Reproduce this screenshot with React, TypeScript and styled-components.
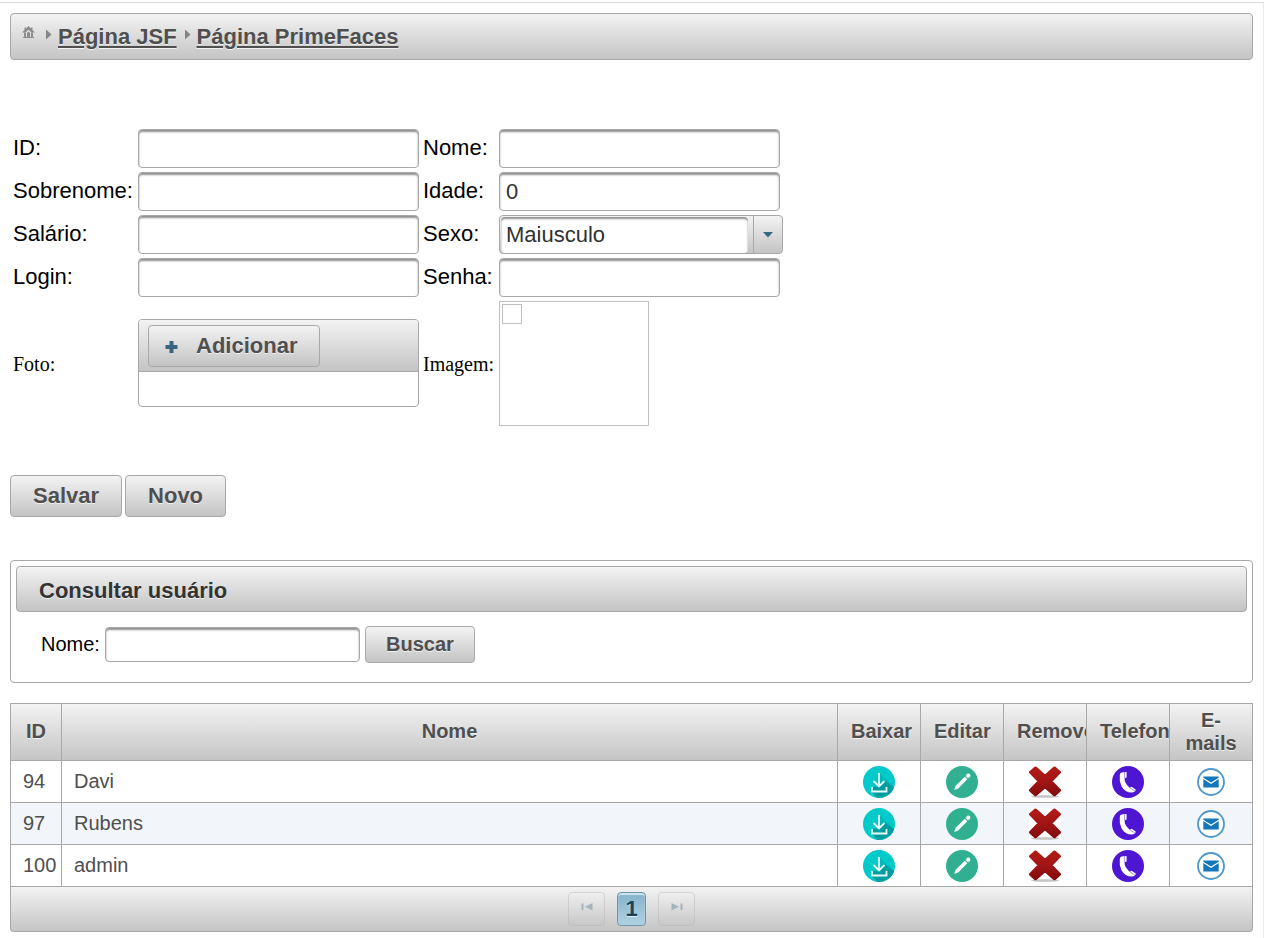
import React from 'react';
import styled, { createGlobalStyle, css } from 'styled-components';

const line = '#a8a8a8';
const sans = '"Liberation Sans", Arial, Helvetica, sans-serif';
const serif = '"Liberation Serif", "Times New Roman", serif';

const GlobalStyle = createGlobalStyle`
  *, *::before, *::after { box-sizing: border-box; }
  body { margin: 0; background: #fff; color: #000; font-family: ${sans}; }
`;

const raised = css`
  border: 1px solid ${line};
  background: linear-gradient(#f3f3f3, #c4c4c4);
  color: #4f4f4f;
  text-shadow: 0 1px 0 rgba(255, 255, 255, 0.7);
`;

const sunken = css`
  border: 1px solid ${line};
  border-radius: 4px;
  background: #fff;
  box-shadow: inset 0 2px 2px #8f8f8f;
  color: #313131;
  font-family: ${sans};
`;

const Page = styled.div`
  margin: 2px 6px 0 0;
  padding: 10px 10px 6px;
  border-top: 1px solid #dadada;
  border-right: 1px solid #ececec;
`;

const Breadcrumb = styled.nav`
  ${raised}
  display: flex;
  align-items: center;
  height: 47px;
  padding: 0 11px;
  border-radius: 4px;
  font-size: 22px;
  font-weight: bold;
`;

const CrumbLink = styled.a`
  color: inherit;
  text-decoration: underline;
  text-decoration-thickness: 2px;
  text-underline-offset: 2px;
`;

const HomeLink = styled.a`
  display: flex;
  padding-bottom: 7px;
`;

const Separator = styled.svg`
  width: 20px;
  height: 16px;
  margin-bottom: 6px;
`;

const Form = styled.form`
  display: grid;
  grid-template-columns: 121px 281px 72px 284px;
  gap: 4px;
  align-items: center;
  padding: 69px 0 0 3px;
`;

const Label = styled.label`
  padding-bottom: 1px;
  font-size: 22px;
  line-height: 26px;
  white-space: nowrap;
`;

const PlainLabel = styled.label`
  font-family: ${serif};
  font-size: 20px;
  line-height: 24px;
`;

const Field = styled.input`
  ${sunken}
  width: 281px;
  height: 39px;
  padding: 0 6px;
  font-size: 22px;
`;

const SelectBox = styled.div`
  ${raised}
  display: grid;
  grid-template-columns: 1fr 29px;
  height: 39px;
  border-radius: 4px;
`;

const Select = styled.select`
  ${sunken}
  grid-area: 1 / 1;
  appearance: none;
  margin: 1px 5px 0 1px;
  padding: 0 5px 1px;
  border-width: 0;
  font-size: 22px;
`;

const SelectTrigger = styled.span`
  display: flex;
  align-items: center;
  justify-content: center;
  border-left: 1px solid ${line};
`;

const Upload = styled.div`
  height: 88px;
  margin-bottom: 1px;
  border: 1px solid ${line};
  border-radius: 4px;
  overflow: hidden;
`;

const UploadBar = styled.div`
  ${raised}
  border-width: 0 0 1px;
  padding: 5px 9px 4px;
`;

const Button = styled.button<{ $compact?: boolean }>`
  ${raised}
  display: inline-flex;
  align-items: center;
  height: ${p => (p.$compact ? 37 : 42)}px;
  padding: 0 ${p => (p.$compact ? 20 : 22)}px;
  border-radius: 4px;
  font-family: ${sans};
  font-size: ${p => (p.$compact ? 20 : 22)}px;
  font-weight: bold;
`;

const AddButton = styled(Button)`
  gap: 18px;
  padding: 0 22px 0 15px;
`;

const Preview = styled.div`
  width: 150px;
  height: 125px;
  padding: 2px;
  border: 1px solid #c0c0c0;
`;

const PreviewMark = styled.div`
  width: 20px;
  height: 20px;
  border: 1px solid #c0c0c0;
`;

const Actions = styled.div`
  display: flex;
  gap: 3px;
  margin: 49px 0 43px;
`;

const Panel = styled.section`
  padding: 5px;
  border: 1px solid ${line};
  border-radius: 4px;
`;

const PanelTitle = styled.h2`
  ${raised}
  height: 46px;
  margin: 0;
  padding: 0 22px;
  border-radius: 4px;
  color: #333;
  font-size: 22px;
  line-height: 47px;
`;

const Search = styled.form`
  display: flex;
  align-items: center;
  gap: 5px;
  padding: 14px 25px;
`;

const SearchLabel = styled(Label)`
  width: 59px;
  font-size: 20px;
`;

const SearchField = styled(Field)`
  width: 255px;
  height: 35px;
  font-size: 20px;
`;

const Table = styled.table`
  width: 100%;
  margin-top: 20px;
  border-collapse: collapse;
  table-layout: fixed;
  font-size: 20px;
  color: #4f4f4f;
`;

const IdCol = styled.col`
  width: 51px;
`;

const ActionCol = styled.col`
  width: 83px;
`;

const HeadRow = styled.tr`
  height: 57px;
  background: linear-gradient(#f3f3f3, #c4c4c4);
`;

const Th = styled.th`
  padding: 0 13px 1px;
  border: 1px solid ${line};
  overflow: hidden;
  line-height: 23px;
  text-shadow: 0 1px 0 rgba(255, 255, 255, 0.7);
`;

const Row = styled.tr`
  height: 42px;
  &:nth-child(even) { background: #f2f5f9; }
`;

const Td = styled.td`
  padding: 0 0 2px 12px;
  border: 1px solid ${line};
  line-height: 24px;
`;

const IconTd = styled.td`
  padding: 0;
  border: 1px solid ${line};
`;

const IconButton = styled.button`
  display: block;
  width: 32px;
  height: 32px;
  margin: 1px auto 0;
  padding: 0;
  border: 0;
  background: none;
  cursor: pointer;
  svg { display: block; }
`;

const Paginator = styled.div`
  ${raised}
  display: flex;
  align-items: center;
  justify-content: center;
  gap: 12px;
  height: 45px;
  padding-bottom: 1px;
  border-top-width: 0;
  border-radius: 0 0 4px 4px;
`;

const PageButton = styled.button<{ $current?: boolean }>`
  ${raised}
  display: flex;
  align-items: center;
  justify-content: center;
  width: 37px;
  height: 34px;
  padding: 0 0 4px;
  border-radius: 4px;
  &:disabled { opacity: 0.35; }
  ${p =>
    p.$current &&
    css`
      width: 29px;
      padding: 0;
      border-color: #6c98ad;
      background: linear-gradient(#85b2cb, #b0d2e3);
      box-shadow: inset 0 2px 1px #cfe4ef;
      color: #1c4257;
      font-family: ${sans};
      font-size: 22px;
      font-weight: bold;
    `}
`;

const HomeIcon = () => (
  <svg width="16" height="16" viewBox="0 0 16 16" fill="#8c8c8c">
    <path d="M6.500 1L13 7.500H9.500L6.500 4.800 3.500 7.500H0L2.500 5V2.500h1.500v1zM9 2.500h1.500v3H9z" />
    <path d="M2 7.500h2V12h1V8l1.500-1.500L8 8v4h1V7.500h2V12h1v1H1v-1h1z" />
    <path d="M5.800 8h1.400v5H5.800z" />
  </svg>
);

const Arrow = () => (
  <Separator viewBox="0 0 20 16" aria-hidden="true">
    <path d="M8 3.500v10l5.500-5z" fill="#858585" />
  </Separator>
);

const PlusIcon = () => (
  <svg width="14" height="14" viewBox="0 0 14 14" aria-hidden="true">
    <path d="M5.500 2h4v4h4v4h-4v4h-4v-4h-4V6h4z" fill="#38667f" />
  </svg>
);

const DownloadIcon = () => (
  <svg width="32" height="32" viewBox="0 0 32 32">
    <circle cx="16" cy="16" r="16" fill="#00cbca" />
    <path d="M16.500 8L22 14.500l9.200 6.500A16 16 0 0 1 14.500 31.900L8.500 26v-5l7.500-.5z" fill="#009da0" />
    <path d="M16.500 7L23 13.500 30 18 22 15l-5.500 5.500z" fill="#00b8b9" />
    <path d="M16 7v13.500M10.500 15l5.500 5.500 5.500-5.500M9 21v4.500h14.500V21" fill="none" stroke="#e8ffff" strokeWidth="1.800" />
  </svg>
);

const EditIcon = () => (
  <svg width="32" height="32" viewBox="0 0 32 32">
    <circle cx="16" cy="16" r="16" fill="#31b091" />
    <path d="M8.200 24l1.500-4.200L18.800 10.700l2.500 2.500-9.100 9.200z" fill="#fff" />
    <path d="M19.700 9.800l2.500 2.500" stroke="#b8e2d7" strokeWidth="1" />
    <circle cx="22.300" cy="9.700" r="2.100" fill="#fff" />
  </svg>
);

const RemoveIcon = () => (
  <svg width="32" height="32" viewBox="0 0 32 32">
    <defs>
      <linearGradient id="removeFill" gradientUnits="userSpaceOnUse" x1="0" y1="0" x2="0" y2="32">
        <stop offset="0" stopColor="#b31b17" />
        <stop offset="0.5" stopColor="#a01514" />
        <stop offset="1" stopColor="#7c0a0b" />
      </linearGradient>
    </defs>
    <path d="M0 0h32v32H0z" fill="#fff" />
    <ellipse cx="16" cy="30.500" rx="14" ry="1.300" fill="#c4c4c4" />
    <path
      d="M6.500 2L16 10.300 25.500 2l5 4.300L21.800 15.300l8.700 9L25.500 28.800 16 20.500 6.500 28.800l-5-4.500 8.700-9L1.500 6.300z"
      fill="url(#removeFill)"
      stroke="url(#removeFill)"
      strokeWidth="3"
      strokeLinejoin="round"
    />
  </svg>
);

const PhoneIcon = () => (
  <svg width="32" height="32" viewBox="0 0 32 32">
    <circle cx="16" cy="16" r="16" fill="#4e16d3" />
    <path d="M8.500 7Q10 6 14.600 6v5.600l-2 .7q-.4 4.700 5 9.400l2-1 4.100 2.700q0 2.600-4 3.200-6.700 0-10.200-6.400Q7 14.500 7.800 9q.2-1.500.7-2z" fill="#fff" />
    <path d="M12.600 5.800v6.400M17.800 21.800l5 3.200" stroke="#8a66e4" strokeWidth=".7" />
  </svg>
);

const MailIcon = () => (
  <svg width="32" height="32" viewBox="0 0 32 32">
    <circle cx="16" cy="16" r="13" fill="#fff" stroke="#4d97ca" strokeWidth="1.800" />
    <path d="M8.300 10.500h15.400v1.300L16 16.500l-7.700-4.700z" fill="#1577bb" />
    <path d="M8.300 12.900l7.700 5 7.700-5v8.600H8.300z" fill="#1577bb" />
  </svg>
);

const SeekIcon = ({ end }: { end?: boolean }) => (
  <svg width="14" height="10" viewBox="0 0 14 10" aria-hidden="true">
    <path d={end ? 'M1.500 1v7.500L9 4.700zM10.500 1.500h2v6.500h-2z' : 'M1.500 1.500h2V8h-2zM12.500 1v7.500L5 4.700z'} fill="#38667f" />
  </svg>
);

const rowActions = [
  { name: 'Baixar', Icon: DownloadIcon },
  { name: 'Editar', Icon: EditIcon },
  { name: 'Remover', Icon: RemoveIcon },
  { name: 'Telefone', Icon: PhoneIcon },
  { name: 'E-mails', Icon: MailIcon },
];

const users = [
  { id: 94, name: 'Davi' },
  { id: 97, name: 'Rubens' },
  { id: 100, name: 'admin' },
];

export default function App() {
  return (
    <>
      <GlobalStyle />
      <Page>
        <Breadcrumb>
          <HomeLink href="#" aria-label="Home"><HomeIcon /></HomeLink>
          <Arrow />
          <CrumbLink href="#">Página JSF</CrumbLink>
          <Arrow />
          <CrumbLink href="#">Página PrimeFaces</CrumbLink>
        </Breadcrumb>

        <Form id="user" onSubmit={e => e.preventDefault()}>
          <Label htmlFor="id">ID:</Label>
          <Field id="id" />
          <Label htmlFor="nome">Nome:</Label>
          <Field id="nome" />
          <Label htmlFor="sobrenome">Sobrenome:</Label>
          <Field id="sobrenome" />
          <Label htmlFor="idade">Idade:</Label>
          <Field id="idade" defaultValue="0" />
          <Label htmlFor="salario">Salário:</Label>
          <Field id="salario" />
          <Label htmlFor="sexo">Sexo:</Label>
          <SelectBox>
            <Select id="sexo">
              <option>Maiusculo</option>
            </Select>
            <SelectTrigger>
              <svg width="10" height="6" viewBox="0 0 10 6" aria-hidden="true">
                <path d="M0 0h10L5 5.500z" fill="#38667f" />
              </svg>
            </SelectTrigger>
          </SelectBox>
          <Label htmlFor="login">Login:</Label>
          <Field id="login" />
          <Label htmlFor="senha">Senha:</Label>
          <Field id="senha" type="password" />
          <PlainLabel htmlFor="foto">Foto:</PlainLabel>
          <Upload>
            <UploadBar>
              <AddButton id="foto" type="button"><PlusIcon />Adicionar</AddButton>
            </UploadBar>
          </Upload>
          <PlainLabel as="span">Imagem:</PlainLabel>
          <Preview><PreviewMark /></Preview>
        </Form>

        <Actions>
          <Button type="submit" form="user">Salvar</Button>
          <Button type="reset" form="user">Novo</Button>
        </Actions>

        <Panel>
          <PanelTitle>Consultar usuário</PanelTitle>
          <Search onSubmit={e => e.preventDefault()}>
            <SearchLabel htmlFor="busca">Nome:</SearchLabel>
            <SearchField id="busca" />
            <Button $compact type="submit">Buscar</Button>
          </Search>
        </Panel>

        <Table>
          <colgroup>
            <IdCol />
            <col />
            {rowActions.map(a => <ActionCol key={a.name} />)}
          </colgroup>
          <thead>
            <HeadRow>
              <Th>ID</Th>
              <Th>Nome</Th>
              {rowActions.map(a => <Th key={a.name}>{a.name}</Th>)}
            </HeadRow>
          </thead>
          <tbody>
            {users.map(u => (
              <Row key={u.id}>
                <Td>{u.id}</Td>
                <Td>{u.name}</Td>
                {rowActions.map(({ name, Icon }) => (
                  <IconTd key={name}>
                    <IconButton type="button" aria-label={`${name} ${u.name}`}><Icon /></IconButton>
                  </IconTd>
                ))}
              </Row>
            ))}
          </tbody>
        </Table>
        <Paginator>
          <PageButton disabled aria-label="Primeira"><SeekIcon /></PageButton>
          <PageButton $current>1</PageButton>
          <PageButton disabled aria-label="Última"><SeekIcon end /></PageButton>
        </Paginator>
      </Page>
    </>
  );
}
